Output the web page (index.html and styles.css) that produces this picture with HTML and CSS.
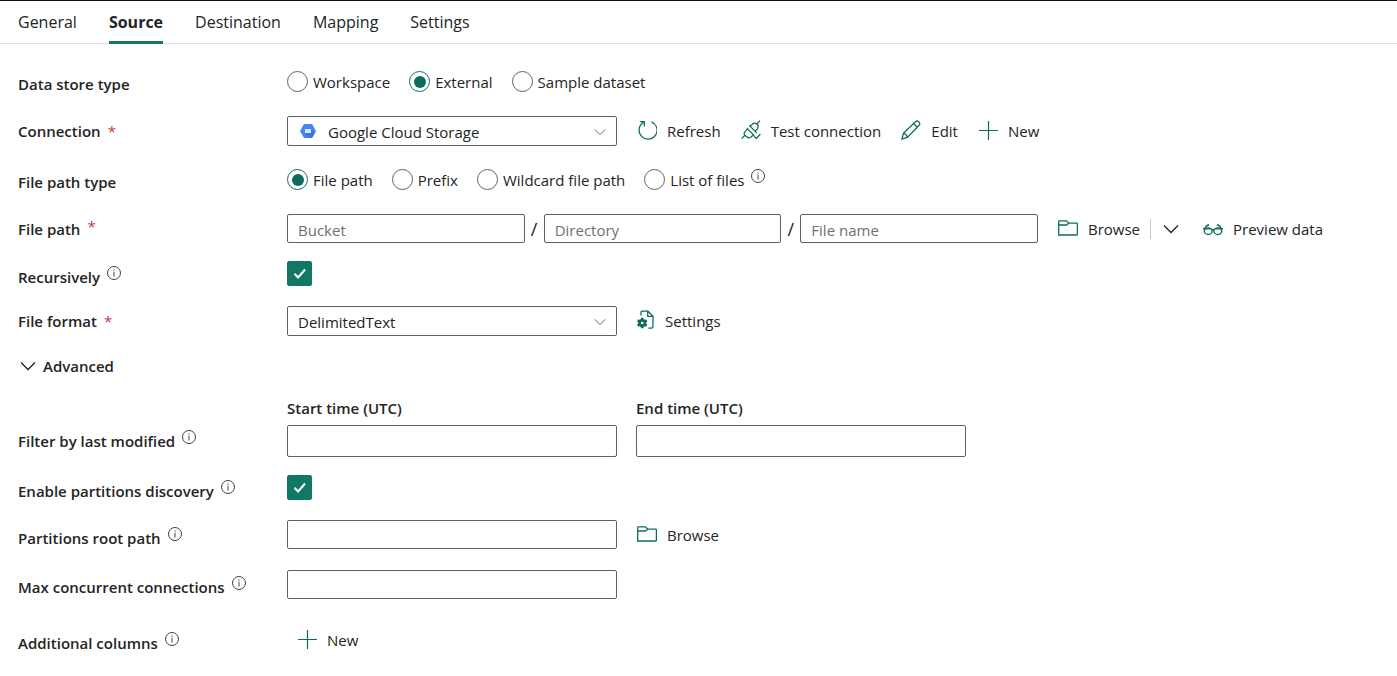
FILE: index.html
```html
<!DOCTYPE html>
<html lang="en">
<head>
<meta charset="utf-8">
<title>Copy data - Source</title>
<link rel="stylesheet" href="styles.css">
</head>
<body>
<svg class="sprite" aria-hidden="true">
  <symbol id="i-info" viewBox="0 0 14 14"><circle cx="7" cy="7" r="6.5" fill="none" stroke="#424242"/><path d="M7 5.7v4.8M7 3.4v1.3" fill="none" stroke="#424242"/></symbol>
  <symbol id="i-chevron" viewBox="0 0 16 10"><path d="M1 1.5l7 7 7-7" fill="none" stroke="currentColor" stroke-width="1.3"/></symbol>
  <symbol id="i-plus" viewBox="0 0 20 20"><path d="M10.5 1v19M1 10.5h19" fill="none" stroke="#0f6c5c" stroke-width="1.2"/></symbol>
  <symbol id="i-folder" viewBox="0 0 20 20"><path d="M.7 17V3.600q0-.8.8-.8h7l2.200 2.400h8q.7 0 .7.8v10.200q0 .8-.8.8zM.7 7h7.800l2.200-1.800" fill="none" stroke="#0f6c5c" stroke-width="1.3"/></symbol>
  <symbol id="i-check" viewBox="0 0 25 25"><path d="M7.500 12.700l3.600 3.800 7-8" fill="none" stroke="#fff" stroke-width="2"/></symbol>
</svg>

<nav class="tabs">
  <a class="tab" href="#general">General</a>
  <a class="tab tab-active" href="#source" aria-current="page">Source</a>
  <a class="tab" href="#destination">Destination</a>
  <a class="tab" href="#mapping">Mapping</a>
  <a class="tab" href="#settings">Settings</a>
</nav>

<form class="form">
  <div class="row" role="radiogroup" aria-labelledby="l-store">
    <div class="label label-low" id="l-store">Data store type</div>
    <div class="radios">
      <label class="radio"><input type="radio" name="store">Workspace</label>
      <label class="radio"><input type="radio" name="store" checked>External</label>
      <label class="radio"><input type="radio" name="store">Sample dataset</label>
    </div>
  </div>

  <div class="row">
    <label class="label" for="connection">Connection <span class="required">*</span></label>
    <div class="controls">
      <div class="picker">
        <svg class="picker-logo" viewBox="0 0 16 14" aria-hidden="true"><path d="M4.6 0h6.800q.6 0 .9.5l3.400 5.900q.3.600 0 1.200l-3.400 5.900q-.3.500-.9.500H4.600q-.6 0-.9-.5L.3 7.600q-.3-.6 0-1.200L3.700.5q.3-.5.900-.5z" fill="#4285f4"/><path d="M10.500 5l4.300 4.300-2.500 4.200q-.3.500-.9.500H9.800L5.500 9.500z" fill="#3a73dc"/><rect x="5" y="5" width="6" height="4" fill="#d9e6fd"/></svg>
        <select class="select select-with-logo" id="connection"><option>Google Cloud Storage</option></select>
        <svg class="picker-arrow" aria-hidden="true"><use href="#i-chevron"/></svg>
      </div>
      <button class="action" type="button"><svg class="icon" viewBox="0 0 20 20" aria-hidden="true"><path d="M14.500 1.800a9 9 0 1 1-8.200.7M2.800 1.600h4.500v5" fill="none" stroke="#0f6c5c" stroke-width="1.300"/></svg>Refresh</button>
      <button class="action" type="button"><svg class="icon" viewBox="0 0 20 20" aria-hidden="true"><g fill="none" stroke="#0f6c5c" stroke-width="1.200"><path d="M.7 18.500l3.500-3.500M3.900 15.200q-1.600-1.700.1-3.500l2.700-2.700 5.800 5.800-2.100 2q-2.500 2-4.700 0zM5.800 8.100l7.600 7.600M8.300 5.500l7.600 7.600M9.200 6.400l2.300-2.400q2.200-1.900 4.500 0 2.200 2.300.3 4.800l-1.900 2.200M16 4l3-3.400M13 16.200l2.400 2.300 4-4.500"/></g></svg>Test connection</button>
      <button class="action" type="button"><svg class="icon" viewBox="0 0 20 20" aria-hidden="true"><path d="M1 19l1.400-5.600L14.500 1.700q1.600-1.400 3.300.2t.3 3.300L6.400 17.400zM12.600 3.500l3.800 3.800M2.400 13.400q3.300.5 4 4" fill="none" stroke="#0f6c5c" stroke-width="1.300"/></svg>Edit</button>
      <button class="action" type="button"><svg class="icon" aria-hidden="true"><use href="#i-plus"/></svg>New</button>
    </div>
  </div>

  <div class="row" role="radiogroup" aria-labelledby="l-pathtype">
    <div class="label label-low" id="l-pathtype">File path type</div>
    <div class="radios">
      <label class="radio"><input type="radio" name="pathtype" checked>File path</label>
      <label class="radio"><input type="radio" name="pathtype">Prefix</label>
      <label class="radio"><input type="radio" name="pathtype">Wildcard file path</label>
      <label class="radio"><input type="radio" name="pathtype">List of files<svg class="info" aria-hidden="true"><use href="#i-info"/></svg></label>
    </div>
  </div>

  <div class="row">
    <label class="label" for="bucket">File path <span class="required required-high">*</span></label>
    <div class="controls">
      <div class="path">
        <input class="field" id="bucket" type="text" placeholder="Bucket">
        <span class="slash">/</span>
        <input class="field" type="text" placeholder="Directory" aria-label="Directory">
        <span class="slash">/</span>
        <input class="field" type="text" placeholder="File name" aria-label="File name">
      </div>
      <div class="split">
        <button class="action" type="button"><svg class="icon" aria-hidden="true"><use href="#i-folder"/></svg>Browse</button>
        <button class="split-more" type="button" aria-label="More browse options"><svg class="chevron" aria-hidden="true"><use href="#i-chevron"/></svg></button>
      </div>
      <button class="action" type="button"><svg class="icon" viewBox="0 0 20 20" aria-hidden="true"><g fill="none" stroke="#0f6c5c" stroke-width="1.400"><ellipse cx="5.200" cy="13.200" rx="3.900" ry="3.300"/><ellipse cx="14.800" cy="13.200" rx="3.900" ry="3.300"/><path d="M8.800 12q1.200-1 2.400 0M0 10.800h2.500M17.500 10.800H20M1.800 10.800q1-3.400 4.200-4.100M18.200 10.800q-1-3.400-4.200-4.100M2.500 10.900h5.300M12.200 10.900h5.300"/></g></svg>Preview data</button>
    </div>
  </div>

  <div class="row row-check">
    <label class="label label-info" for="recursive">Recursively<svg class="info" aria-hidden="true"><use href="#i-info"/></svg></label>
    <div class="check"><input type="checkbox" id="recursive" checked><svg class="check-mark" aria-hidden="true"><use href="#i-check"/></svg></div>
  </div>

  <div class="row row-loose">
    <label class="label" for="format">File format <span class="required">*</span></label>
    <div class="controls">
      <div class="picker">
        <select class="select" id="format"><option>DelimitedText</option></select>
        <svg class="picker-arrow" aria-hidden="true"><use href="#i-chevron"/></svg>
      </div>
      <button class="action action-tight" type="button"><svg class="icon" viewBox="0 0 20 20" aria-hidden="true"><path d="M4 5.500V2.500q0-1.300 1.300-1.300H11l5 5v10.300q0 1.700-1.700 1.700h-3M10.700 1.200v5.200H16" fill="none" stroke="#0f6c5c" stroke-width="1.300"/><circle cx="5.200" cy="13" r="2.700" fill="none" stroke="#0f6c5c" stroke-width="2.800"/><path d="M5.200 7.700v2.500M5.200 15.800v2.500M.6 10.300l2.200 1.300M7.600 14.400l2.200 1.300M.6 15.700l2.200-1.300M7.600 11.600l2.200-1.300" stroke="#0f6c5c" stroke-width="2.600"/></svg>Settings</button>
    </div>
  </div>

  <button class="advanced" type="button" aria-expanded="true"><svg class="chevron" aria-hidden="true"><use href="#i-chevron"/></svg>Advanced</button>

  <div class="row row-filter">
    <div class="label label-filter">Filter by last modified<svg class="info" aria-hidden="true"><use href="#i-info"/></svg></div>
    <div class="controls controls-pair">
      <label class="stack">Start time (UTC)<input class="field field-tall" type="text"></label>
      <label class="stack">End time (UTC)<input class="field field-tall" type="text"></label>
    </div>
  </div>

  <div class="row">
    <label class="label label-info" for="discovery">Enable partitions discovery<svg class="info" aria-hidden="true"><use href="#i-info"/></svg></label>
    <div class="check"><input type="checkbox" id="discovery" checked><svg class="check-mark" aria-hidden="true"><use href="#i-check"/></svg></div>
  </div>

  <div class="row row-snug">
    <label class="label label-info" for="root">Partitions root path<svg class="info" aria-hidden="true"><use href="#i-info"/></svg></label>
    <div class="controls">
      <input class="field field-fixed" id="root" type="text">
      <button class="action" type="button"><svg class="icon" aria-hidden="true"><use href="#i-folder"/></svg>Browse</button>
    </div>
  </div>

  <div class="row row-loose">
    <label class="label label-info" for="max">Max concurrent connections<svg class="info" aria-hidden="true"><use href="#i-info"/></svg></label>
    <div class="controls"><input class="field field-fixed" id="max" type="text"></div>
  </div>

  <div class="row row-last">
    <div class="label label-info">Additional columns<svg class="info" aria-hidden="true"><use href="#i-info"/></svg></div>
    <div class="controls controls-inset">
      <button class="action" type="button"><svg class="icon" aria-hidden="true"><use href="#i-plus"/></svg>New</button>
    </div>
  </div>
</form>
</body>
</html>
```
FILE: styles.css
```css
* {
  box-sizing: border-box;
}

body {
  margin: 0;
  border-top: 1px solid #111;
  background: #fff;
  color: #242424;
  font: 15px/20px "Open Sans", "Noto Sans", sans-serif;
}

input,
select,
button {
  margin: 0;
  color: inherit;
  font: inherit;
}

button {
  padding: 0;
  border: 0;
  background: none;
  cursor: pointer;
}

svg {
  flex: none;
}

.sprite {
  display: block;
  width: 0;
  height: 0;
}

.tabs {
  display: flex;
  gap: 32px;
  height: 43px;
  padding-left: 18px;
  border-bottom: 1px solid #e0e0e0;
}

.tab {
  height: 43px;
  border-bottom: 3px solid transparent;
  color: inherit;
  font-size: 16px;
  line-height: 43px;
  text-decoration: none;
}

.tab-active {
  border-bottom-color: #117865;
  font-weight: 700;
}

.form {
  padding: 13px 18px 8px;
}

.row {
  display: grid;
  grid-template-columns: 269px 1fr;
  align-items: center;
  min-height: 49px;
}

.row-check {
  min-height: 41px;
}

.row-snug {
  min-height: 45px;
}

.row-loose {
  min-height: 54px;
}

.row-last {
  min-height: 58px;
}

.row-filter {
  align-items: end;
  min-height: 79px;
  padding-bottom: 6px;
}

.label {
  display: flex;
  align-items: center;
  gap: 7px;
  font-weight: 600;
}

.label-low {
  padding-top: 4px;
}

.label-info {
  padding-top: 6px;
}

.label-filter {
  padding-bottom: 5px;
}

.required {
  color: #d13438;
  font-weight: 400;
}

.required-high {
  padding-bottom: 6px;
}

.info {
  width: 14px;
  height: 14px;
  margin-bottom: 8px;
}

.controls {
  display: flex;
  align-items: center;
  gap: 20px;
}

.controls-inset {
  padding-left: 10px;
}

.controls-pair {
  gap: 19px;
}

.radios {
  display: flex;
  gap: 19px;
}

.radio {
  display: flex;
  align-items: center;
  gap: 5px;
}

.radio .info {
  margin-left: 2px;
}

.radio input {
  display: grid;
  place-items: center;
  width: 21px;
  height: 21px;
  border: 1px solid #616161;
  border-radius: 50%;
  appearance: none;
}

.radio input:checked {
  border-color: #0f6c5c;
}

.radio input:checked::before {
  width: 12px;
  height: 12px;
  border-radius: 50%;
  background: #0f6c5c;
  content: "";
}

.picker {
  position: relative;
  width: 330px;
}

.picker-logo {
  position: absolute;
  top: 8px;
  left: 13px;
  width: 16px;
  height: 14px;
}

.picker-arrow {
  position: absolute;
  top: 12px;
  right: 11px;
  width: 12px;
  height: 8px;
  color: #616161;
  pointer-events: none;
}

.select,
.field {
  display: block;
  width: 100%;
  height: 30px;
  padding: 2px 10px 0;
  border: 1px solid #616161;
  border-radius: 2px;
  background: #fff;
}

.field {
  height: 29px;
}

.select {
  appearance: none;
}

.select-with-logo {
  padding-left: 40px;
}

.field::placeholder {
  color: #707070;
  opacity: 1;
}

.field-fixed {
  width: 330px;
}

.field-tall {
  height: 32px;
}

.stack {
  display: grid;
  gap: 7px;
  width: 330px;
  font-weight: 600;
}

.path {
  display: flex;
  align-items: center;
  width: 751px;
}

.path .field {
  flex: 1;
  min-width: 0;
}

.slash {
  width: 19px;
  font-size: 18px;
  text-align: center;
}

.action {
  display: flex;
  align-items: center;
  gap: 10px;
}

.action-tight {
  gap: 8px;
}

.icon {
  width: 20px;
  height: 20px;
  margin-bottom: 2px;
}

.split {
  display: flex;
  align-items: center;
  gap: 10px;
  margin-right: 4px;
}

.split-more {
  display: flex;
  align-items: center;
  height: 20px;
  padding-left: 12px;
  border-left: 1px solid #c8c8c8;
}

.chevron {
  width: 16px;
  height: 10px;
}

.check {
  display: grid;
  width: 25px;
}

.check input,
.check-mark {
  grid-area: 1 / 1;
  width: 25px;
  height: 25px;
}

.check input {
  border: 1px solid #616161;
  border-radius: 2px;
  appearance: none;
}

.check input:checked {
  border-color: #117865;
  background: #117865;
}

.check-mark {
  pointer-events: none;
}

.advanced {
  display: flex;
  align-items: center;
  gap: 7px;
  min-height: 36px;
  padding-left: 2px;
  font-weight: 600;
}
```
